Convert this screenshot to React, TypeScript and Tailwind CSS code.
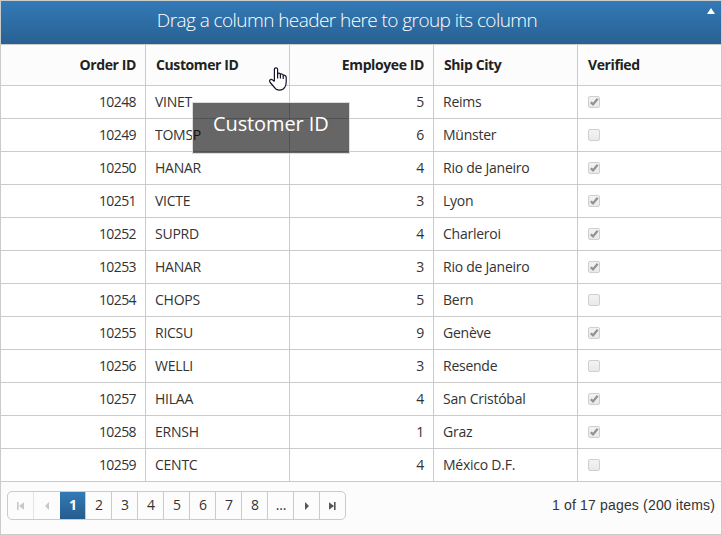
import React from "react";

type Order = [number, string, number, string, boolean];

const orders: Order[] = [
  [10248, "VINET", 5, "Reims", true],
  [10249, "TOMSP", 6, "Münster", false],
  [10250, "HANAR", 4, "Rio de Janeiro", true],
  [10251, "VICTE", 3, "Lyon", true],
  [10252, "SUPRD", 4, "Charleroi", true],
  [10253, "HANAR", 3, "Rio de Janeiro", true],
  [10254, "CHOPS", 5, "Bern", false],
  [10255, "RICSU", 9, "Genève", true],
  [10256, "WELLI", 3, "Resende", false],
  [10257, "HILAA", 4, "San Cristóbal", true],
  [10258, "ERNSH", 1, "Graz", true],
  [10259, "CENTC", 4, "México D.F.", false],
];

function CheckBox({ checked }: { checked: boolean }) {
  return (
    <span className="block size-3 rounded-[2px] border border-[#cfcfcf] bg-linear-to-b from-[#f3f3f3] to-[#e9e9e9]">
      {checked && (
        <svg viewBox="0 0 10 10" className="block size-[10px]">
          <path d="M1.8 5.2 4 7.4 8.7 1.8" fill="none" stroke="#929292" strokeWidth="2.3" />
        </svg>
      )}
    </span>
  );
}

function PagerIcon({ kind }: { kind: "first" | "prev" | "next" | "last" }) {
  const paths = {
    first: "M1 1h1.6v8H1zM8 1.3v7.4L3 5z",
    prev: "M6 1v8L2 5z",
    next: "M3 1v8l4-4z",
    last: "M1 1.3v7.4L6 5zM6 1H7.6v8H6z",
  };
  return (
    <svg viewBox="0 0 9 10" className="h-[10px] w-[9px]" fill="currentColor">
      <path d={paths[kind]} />
    </svg>
  );
}

function HandCursor() {
  return (
    <svg viewBox="0 0 18 24" className="absolute left-[268px] top-[66px] h-6 w-[18px]">
      <path
        d="M5.4 14V2.6Q5.4.8 7 .8T8.6 2.6V7.5Q8.8 6.2 10 6.2T11.4 7.8Q11.8 6.8 13 7T14.2 8.8Q14.6 8 15.7 8.3T17.2 10V15Q17.2 18 15.8 20.3Q14 23.2 10.5 23.2T5.5 20.5L1.2 15.5Q0 13.6 1.2 12.8T3.6 12.9L5.4 14.6"
        fill="#fff"
        stroke="#15152a"
        strokeWidth="1.2"
        strokeLinejoin="round"
      />
      <path d="M8.6 7V11.5M11.4 8V11.5M14.2 9V12" fill="none" stroke="#15152a" strokeWidth="1.2" />
    </svg>
  );
}

const grid = "grid grid-cols-[145px_144px_144px_144px_143px]";
const cell = "flex items-center border-r border-[#cbcbcb] px-[9px] pb-px";
const head = "flex items-center border-r border-[#cbcbcb] pl-[10px] pr-[9px] pb-px";

export default function App() {
  return (
    <div className="relative flex h-[535px] w-[722px] flex-col overflow-hidden border border-[#cbcbcb] bg-white font-['Open_Sans','Noto_Sans',sans-serif] text-[14px] tracking-[-0.25px] text-[#333]">
      <div className="relative flex h-11 shrink-0 justify-center border-b border-[#cbcbcb] bg-linear-to-b from-[#337ab7] to-[#286192] pr-[28px] text-[19px] font-light leading-[39px] tracking-[-0.57px] text-white">
        <span className="whitespace-nowrap">Drag a column header here to group its column</span>
        <svg viewBox="0 0 8 6" className="absolute right-[6px] top-[7px] h-[6px] w-2" fill="#fff">
          <path d="M0 6 4 0 8 6z" />
        </svg>
      </div>
      <div className={`${grid} h-[41px] shrink-0 border-b border-[#cbcbcb] bg-[#fcfcfc] font-bold tracking-[-0.4px] text-[#222]`}>
        <div className={`${head} justify-end`}>Order ID</div>
        <div className={head}>Customer ID</div>
        <div className={`${head} justify-end`}>Employee ID</div>
        <div className={head}>Ship City</div>
        <div className="flex items-center px-[10px] pb-px">Verified</div>
      </div>
      {orders.map(([id, customer, employee, city, verified]) => (
        <div key={id} className={`${grid} h-[33px] shrink-0 border-b border-[#cbcbcb]`}>
          <div className={`${cell} justify-end tracking-[-0.6px]`}>{id}</div>
          <div className={cell}>{customer}</div>
          <div className={`${cell} justify-end`}>{employee}</div>
          <div className={cell}>{city}</div>
          <div className="flex items-center px-[10px]">
            <CheckBox checked={verified} />
          </div>
        </div>
      ))}
      <div className="flex flex-1 items-start justify-between bg-[#fcfcfc] pl-[6px] pr-[6px] pt-[9px]">
        <div className="flex h-[29px] overflow-hidden rounded-[5px] border border-[#cbcbcb] bg-[#fcfcfc]">
          <span className="flex w-[26px] items-center justify-center border-r border-[#e4e4e4] text-[#c8c8c8]">
            <PagerIcon kind="first" />
          </span>
          <span className="flex w-[26px] items-center justify-center text-[#c8c8c8]">
            <PagerIcon kind="prev" />
          </span>
          <span className="flex w-[26px] items-center justify-center border-r border-[#cbcbcb] bg-linear-to-b from-[#337ab7] to-[#265c8c] pb-0.5 pl-px font-bold text-white">
            1
          </span>
          {["2", "3", "4", "5", "6", "7", "8", "..."].map((p) => (
            <span key={p} className="flex w-[26px] items-center justify-center border-r border-[#cbcbcb] pb-0.5 pl-px">
              {p}
            </span>
          ))}
          <span className="flex w-[26px] items-center justify-center border-r border-[#cbcbcb] text-[#555]">
            <PagerIcon kind="next" />
          </span>
          <span className="flex w-[25px] items-center justify-center text-[#555]">
            <PagerIcon kind="last" />
          </span>
        </div>
        <span className="font-['Liberation_Sans',Arial,sans-serif] text-[14px] leading-[28px] tracking-[0.17px]">
          1 of 17 pages (200 items)
        </span>
      </div>
      <div className="absolute left-[191px] top-[101px] h-[52px] w-[158px] border border-[#dcdcdc] bg-black/60 bg-clip-padding pl-5 text-[20px] leading-[41px] tracking-[-0.1px] text-white">
        Customer ID
      </div>
      <HandCursor />
    </div>
  );
}
